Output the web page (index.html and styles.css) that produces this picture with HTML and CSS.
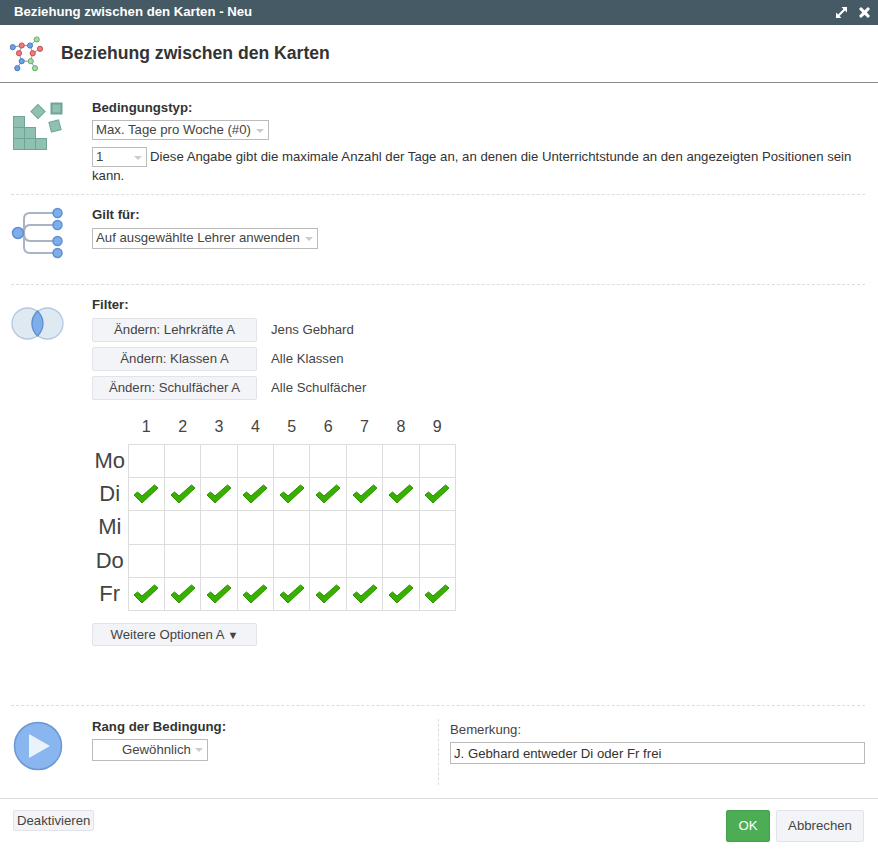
FILE: index.html
```html
<!DOCTYPE html>
<html lang="de">
<head>
<meta charset="utf-8">
<title>Beziehung zwischen den Karten</title>
<link rel="stylesheet" href="styles.css">
</head>
<body>
<div class="titlebar">
  <span class="title">Beziehung zwischen den Karten - Neu</span>
  <span class="win-icons">
    <svg width="11" height="11" viewBox="0 0 11 11"><path d="M5.500 0H11V5.500L9 3.500 3.500 9 5.500 11H0V5.500L2 7.500 7.500 2z" fill="#fff"/></svg>
    <svg width="11" height="11" viewBox="0 0 11 11"><path d="M2 0l3.500 3.200L9 0l2 2-3.200 3.500L11 9l-2 2-3.500-3.200L2 11 0 9l3.200-3.500L0 2z" fill="#fff"/></svg>
  </span>
</div>
<header class="head">
  <svg class="head-icon" width="36" height="38" viewBox="0 0 36 38">
    <g fill="none" stroke="#8a9bb0" stroke-width="1">
      <path d="M2.700 11.200L11.700 9.500 20 9.500 26.700 3.500M11.700 9.500L9 17.200 11.700 25.200 7.300 32.200M20 9.500L22.700 17.200 20.700 25.200 25 32.200M30 12.800L22.700 17.200M11.700 25.200L20.700 25.200"/>
    </g>
    <g stroke-width="1">
      <circle cx="2.700" cy="11.200" r="2.600" fill="#6f9fe0" stroke="#4a7cc0"/>
      <circle cx="11.700" cy="9.500" r="2.600" fill="#ef7a7a" stroke="#c95050"/>
      <circle cx="20" cy="9.500" r="2.600" fill="#6f9fe0" stroke="#4a7cc0"/>
      <circle cx="26.700" cy="3.500" r="2.600" fill="#a5d8a5" stroke="#6cab6c"/>
      <circle cx="9" cy="17.200" r="2.600" fill="#ef7a7a" stroke="#c95050"/>
      <circle cx="22.700" cy="17.200" r="2.600" fill="#ef7a7a" stroke="#c95050"/>
      <circle cx="30" cy="12.800" r="2.600" fill="#ef7a7a" stroke="#c95050"/>
      <circle cx="11.700" cy="25.200" r="2.600" fill="#6f9fe0" stroke="#4a7cc0"/>
      <circle cx="20.700" cy="25.200" r="2.600" fill="#a5d8a5" stroke="#6cab6c"/>
      <circle cx="7.300" cy="32.200" r="2.600" fill="#6f9fe0" stroke="#4a7cc0"/>
      <circle cx="25" cy="32.200" r="2.600" fill="#a5d8a5" stroke="#6cab6c"/>
    </g>
  </svg>
  <h1>Beziehung zwischen den Karten</h1>
</header>
<main class="content">
  <section class="sec sec-type">
    <div class="sec-icon">
      <svg width="52" height="50" viewBox="0 0 52 50">
        <g fill="#8fc0b2" stroke="#6fa596" stroke-width="1">
          <rect x="2.500" y="16.500" width="11" height="11"/><rect x="2.500" y="27.500" width="11" height="11"/><rect x="13.500" y="27.500" width="11" height="11"/>
          <rect x="2.500" y="38.500" width="11" height="11"/><rect x="13.500" y="38.500" width="11" height="11"/><rect x="24.500" y="38.500" width="11" height="11"/>
          <rect x="40.500" y="3.500" width="10" height="10" stroke-width="2"/>
          <rect x="22" y="6.500" width="10" height="10" transform="rotate(45 27 11.500)"/>
          <rect x="39" y="21" width="10" height="10" transform="rotate(-15 44 26)"/>
        </g>
      </svg>
    </div>
    <div class="sec-body">
      <div class="lbl">Bedingungstyp:</div>
      <div class="sel sel-type">Max. Tage pro Woche (#0)<i class="caret"></i></div>
      <div class="desc-row"><div class="sel sel-num">1<i class="caret"></i></div><span class="desc-text">Diese Angabe gibt die maximale Anzahl der Tage an, an denen die Unterrichtstunde an den angezeigten Positionen sein</span></div>
      <div class="desc-end">kann.</div>
    </div>
  </section>
  <section class="sec sec-for">
    <div class="sec-icon">
      <svg width="54" height="52" viewBox="0 0 54 52">
        <g fill="none" stroke="#a9b4c2" stroke-width="2">
          <path d="M8 26H13V12Q13 6 19 6H47"/>
          <path d="M8 26H13Q13 18 19 18H47"/>
          <path d="M8 26H13Q13 34 19 34H47"/>
          <path d="M13 26V40Q13 46 19 46H47"/>
        </g>
        <g fill="#7eaeea" stroke="#5d8fd4" stroke-width="1.500">
          <circle cx="7" cy="26" r="5.500"/>
          <circle cx="46.500" cy="6" r="4.500"/><circle cx="46.500" cy="18" r="4.500"/><circle cx="46.500" cy="34" r="4.500"/><circle cx="46.500" cy="46" r="4.500"/>
        </g>
      </svg>
    </div>
    <div class="sec-body">
      <div class="lbl">Gilt für:</div>
      <div class="sel sel-for">Auf ausgewählte Lehrer anwenden<i class="caret"></i></div>
    </div>
  </section>
  <section class="sec sec-filter">
    <div class="sec-icon">
      <svg width="54" height="34" viewBox="0 0 54 34">
        <circle cx="16.500" cy="16.500" r="15.500" fill="#dfe9f2" stroke="#b3c7de" stroke-width="1.300"/>
        <circle cx="36.500" cy="16.500" r="15.500" fill="#dfe9f2" stroke="#b3c7de" stroke-width="1.300"/>
        <path d="M26.500 4Q32 9.500 32 16.500T26.500 29Q21 23.500 21 16.500T26.500 4Z" fill="#7eaeea" stroke="#5d8fd4" stroke-width="1.300"/>
      </svg>
    </div>
    <div class="sec-body">
      <div class="lbl">Filter:</div>
      <div class="filter-row"><button class="btn btn-filter">Ändern: Lehrkräfte A</button><span>Jens Gebhard</span></div>
      <div class="filter-row"><button class="btn btn-filter">Ändern: Klassen A</button><span>Alle Klassen</span></div>
      <div class="filter-row"><button class="btn btn-filter">Ändern: Schulfächer A</button><span>Alle Schulfächer</span></div>
      <svg width="0" height="0" class="defs"><defs><symbol id="chk" viewBox="0 0 26 20"><path d="M1 11l3.500-3 4.500 4L21.500 1 25 4 9 19z" fill="#38b000" stroke="#2c9200" stroke-width="1"/></symbol></defs></svg>
      <table class="grid">
        <thead><tr><th class="corner"></th><th>1</th><th>2</th><th>3</th><th>4</th><th>5</th><th>6</th><th>7</th><th>8</th><th>9</th></tr></thead>
        <tbody>
          <tr><th>Mo</th><td></td><td></td><td></td><td></td><td></td><td></td><td></td><td></td><td></td></tr>
          <tr><th>Di</th><td><svg class="chk"><use href="#chk"/></svg></td><td><svg class="chk"><use href="#chk"/></svg></td><td><svg class="chk"><use href="#chk"/></svg></td><td><svg class="chk"><use href="#chk"/></svg></td><td><svg class="chk"><use href="#chk"/></svg></td><td><svg class="chk"><use href="#chk"/></svg></td><td><svg class="chk"><use href="#chk"/></svg></td><td><svg class="chk"><use href="#chk"/></svg></td><td><svg class="chk"><use href="#chk"/></svg></td></tr>
          <tr><th>Mi</th><td></td><td></td><td></td><td></td><td></td><td></td><td></td><td></td><td></td></tr>
          <tr><th>Do</th><td></td><td></td><td></td><td></td><td></td><td></td><td></td><td></td><td></td></tr>
          <tr><th>Fr</th><td><svg class="chk"><use href="#chk"/></svg></td><td><svg class="chk"><use href="#chk"/></svg></td><td><svg class="chk"><use href="#chk"/></svg></td><td><svg class="chk"><use href="#chk"/></svg></td><td><svg class="chk"><use href="#chk"/></svg></td><td><svg class="chk"><use href="#chk"/></svg></td><td><svg class="chk"><use href="#chk"/></svg></td><td><svg class="chk"><use href="#chk"/></svg></td><td><svg class="chk"><use href="#chk"/></svg></td></tr>
        </tbody>
      </table>
      <button class="btn btn-filter btn-more">Weitere Optionen A <span class="more-arrow">▼</span></button>
    </div>
  </section>
  <section class="sec sec-rank">
    <div class="sec-icon">
      <svg width="50" height="50" viewBox="0 0 50 50">
        <circle cx="25" cy="25" r="23.500" fill="#8ab6ef" stroke="#6b97d2" stroke-width="1.500"/>
        <path d="M16 13L37 25 16 37Z" fill="#eaf2fc"/>
      </svg>
    </div>
    <div class="rank-left">
      <div class="lbl">Rang der Bedingung:</div>
      <div class="sel sel-rank">Gewöhnlich<i class="caret"></i></div>
    </div>
    <div class="rank-right">
      <div class="note-lbl">Bemerkung:</div>
      <input class="note" type="text" value="J. Gebhard entweder Di oder Fr frei">
    </div>
  </section>
</main>
<footer class="foot">
  <button class="btn btn-deact">Deaktivieren</button>
  <div class="foot-right">
    <button class="btn btn-ok">OK</button>
    <button class="btn btn-cancel">Abbrechen</button>
  </div>
</footer>
</body>
</html>
```
FILE: styles.css
```css
* { box-sizing: border-box; }
html, body { margin: 0; padding: 0; }
body { width: 878px; height: 852px; background: #fff; color: #333; font: 13.2px/16px "Liberation Sans", Arial, sans-serif; overflow: hidden; }

.titlebar { height: 25px; background: #455a64; color: #fff; display: flex; justify-content: space-between; align-items: center; padding: 0 8px 2px 14px; }
.title { font-weight: bold; font-size: 13.2px; }
.win-icons { display: flex; gap: 12px; padding-top: 2px; }

.head { height: 58px; border-bottom: 1px solid #8c8c8c; display: flex; align-items: center; padding: 0 0 0 10px; }
.head-icon { margin-top: 2px; }
h1 { margin: 0 0 2px 15px; font-size: 17.6px; line-height: 20px; font-weight: bold; color: #333; }

.content { padding: 0 13px 0 11px; }
.sec { display: flex; border-bottom: 1px dashed #ddd; }
.sec-icon { width: 81px; flex: none; }
.sec-type { height: 112px; padding-top: 17px; }
.sec-for { height: 90px; padding-top: 12px; }
.sec-for .lbl { margin-bottom: 5px; }
.sec-filter { height: 421px; padding-top: 12px; }
.sec-filter .sec-icon { padding-top: 10px; }
.sec-filter .lbl { margin-bottom: 5px; }
.sec-rank { height: 92px; padding-top: 13px; border-bottom: 0; }
.sec-rank .sec-icon { padding: 2px 0 0 2px; }
.sec-body { flex: 1; }

.lbl { font-weight: bold; line-height: 16px; margin-bottom: 4px; }
.sel { position: relative; height: 20px; line-height: 18px; border: 1px solid #bbb; background: #fff; padding-left: 3px; color: #444; }
.caret { position: absolute; right: 4px; top: 8px; width: 0; height: 0; border: 4px solid transparent; border-top-color: #ccc; border-bottom: 0; }
.sel-type { width: 177px; }
.desc-row { display: flex; gap: 3px; margin-top: 7px; height: 19px; line-height: 19px; white-space: nowrap; }
.desc-end { line-height: 19px; }
.sel-num { flex: none; width: 55px; line-height: 18px; }
.sel-for { width: 226px; height: 21px; }

.filter-row { display: flex; align-items: center; gap: 14px; margin-bottom: 5px; color: #444; }
.btn { font: 13.2px/16px "Liberation Sans", Arial, sans-serif; background: #f3f4f8; border: 1px solid #e2e3e8; border-radius: 2px; color: #444; padding: 0; }
.btn-filter { width: 165px; height: 24px; }

.grid { border-collapse: collapse; margin-top: 18px; table-layout: fixed; width: 364px; }
.defs { position: absolute; }
.grid th { font-weight: normal; color: #444; padding: 0; }
.grid thead th { font-size: 16px; height: 26px; width: 36.4px; padding-bottom: 8px; }
.grid thead .corner { width: 36px; }
.grid tbody th { font-size: 22px; text-align: center; }
.grid tbody tr { height: 33.4px; }
.grid td { border: 1px solid #ddd; padding: 0; text-align: center; vertical-align: middle; }
.chk { width: 26px; height: 20px; display: block; margin: 0 auto; }

.btn-more { display: block; height: 23px; margin-top: 12px; }
.more-arrow { font-size: 11px; }

.rank-left { width: 346px; flex: none; }
.sel-rank { width: 116px; height: 22px; padding-left: 29px; line-height: 20px; }
.rank-right { flex: 1; border-left: 1px dashed #ddd; height: 66px; padding: 3px 0 0 11px; }
.note-lbl { color: #444; line-height: 16px; margin-bottom: 4px; }
.note { display: block; width: 415px; height: 22px; border: 1px solid #bbb; padding: 0 3px; font: 13.2px "Liberation Sans", Arial, sans-serif; color: #333; }

.foot { border-top: 1px solid #ddd; height: 54px; display: flex; justify-content: space-between; padding: 11px 14px 0 13px; align-items: flex-start; }
.btn-deact { height: 21px; padding: 0 3px; }
.foot-right { display: flex; gap: 6px; }
.btn-ok { width: 44px; height: 32px; background: #4cad55; border-color: #45a04e; color: #fff; }
.btn-cancel { width: 88px; height: 32px; }
```
